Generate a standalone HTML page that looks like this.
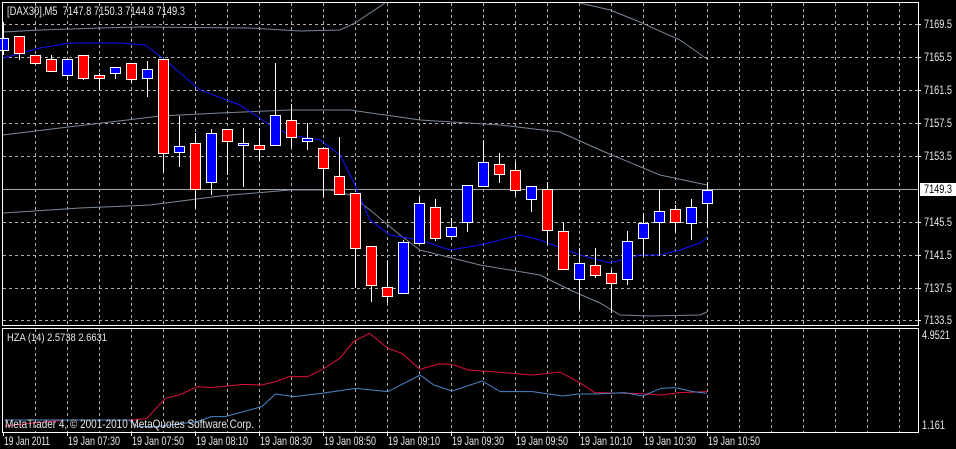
<!DOCTYPE html>
<html><head><meta charset="utf-8"><style>
html,body{margin:0;padding:0;background:#000;width:956px;height:449px;overflow:hidden}
svg{display:block}
text{font-family:"Liberation Sans",sans-serif;font-size:12px;fill:#e8e8e8}
</style></head><body>
<svg width="956" height="449" viewBox="0 0 956 449" xmlns="http://www.w3.org/2000/svg">
<rect width="956" height="449" fill="#000"/>
<g stroke="#b0b0b0" stroke-width="1" stroke-dasharray="3,3" shape-rendering="crispEdges">
<path d="M3 24.5H918M3 57.5H918M3 90.5H918M3 123.5H918M3 156.5H918M3 222.5H918M3 255.5H918M3 288.5H918M3 320.5H918"/>
<path d="M35.5 3V325M67.5 3V325M99.5 3V325M131.5 3V325M163.5 3V325M195.5 3V325M227.5 3V325M259.5 3V325M291.5 3V325M323.5 3V325M355.5 3V325M387.5 3V325M419.5 3V325M451.5 3V325M483.5 3V325M515.5 3V325M547.5 3V325M579.5 3V325M611.5 3V325M643.5 3V325M675.5 3V325M707.5 3V325M739.5 3V325M771.5 3V325M803.5 3V325M835.5 3V325M867.5 3V325M899.5 3V325"/>
<path d="M35.5 329V432M67.5 329V432M99.5 329V432M131.5 329V432M163.5 329V432M195.5 329V432M227.5 329V432M259.5 329V432M291.5 329V432M323.5 329V432M355.5 329V432M387.5 329V432M419.5 329V432M451.5 329V432M483.5 329V432M515.5 329V432M547.5 329V432M579.5 329V432M611.5 329V432M643.5 329V432M675.5 329V432M707.5 329V432M739.5 329V432M771.5 329V432M803.5 329V432M835.5 329V432M867.5 329V432M899.5 329V432"/>
</g>
<path d="M3 189.5H918" stroke="#a8a8a8" stroke-width="1" shape-rendering="crispEdges"/>
<g fill="none" stroke="#7a8898" stroke-width="1">
<polyline points="3,32 40,30 100,28 140,27 250,28 300,31 340,30 355,23 385,3"/>
<polyline points="580,3 610,10 635,20 680,40 707,59"/>
<polyline points="3,135 60,128 160,116 220,113 290,110 350,110 420,120 500,125 560,132 600,150 660,175 707,185"/>
<polyline points="3,213 80,208 150,205 220,196 290,190 330,190 350,195 370,210 400,235 420,250 480,265 540,275 570,290 600,303 620,315 650,316 700,315 707,312"/>
</g>
<polyline fill="none" stroke="#1010ff" stroke-width="1" points="3,58 40,48 70,43 120,43 145,45 165,60 200,90 240,105 270,125 290,135 320,140 340,155 355,185 370,220 390,235 420,240 450,250 480,245 520,235 540,240 580,255 610,263 640,255 660,255 680,250 700,243 707,237"/>
<g stroke="#fff" stroke-width="1">
<path d="M3.5 22V55M19.5 36V60M35.5 55V63M51.5 55V71M67.5 59V80M83.5 55V80M99.5 73V90M115.5 67V79M131.5 63V82M147.5 61V97M163.5 59V172M179.5 116V167M195.5 133V208M211.5 129V195M227.5 129V175M243.5 128V187M259.5 128V161M275.5 63V145M291.5 104V147M307.5 123V150M323.5 147V197M339.5 137V194M355.5 193V288M371.5 246V302M387.5 260V303M403.5 240V293M419.5 197V244M435.5 199V241M451.5 218V238M467.5 185V232M483.5 140V186M499.5 153V183M515.5 162V195M531.5 186V212M547.5 182V245M563.5 223V269M579.5 248V310M595.5 248V278M611.5 270V313M627.5 231V285M643.5 213V256M659.5 190V256M675.5 205V232M691.5 199V240M707.5 182V228"/>
</g>
<g stroke="#fff" stroke-width="1">
<rect x="-1.5" y="38.5" width="10" height="12" fill="#0000ff"/>
<rect x="14.5" y="36.5" width="10" height="17" fill="#ff0000"/>
<rect x="30.5" y="55.5" width="10" height="8" fill="#ff0000"/>
<rect x="46.5" y="59.5" width="10" height="12" fill="#ff0000"/>
<rect x="62.5" y="59.5" width="10" height="16" fill="#0000ff"/>
<rect x="78.5" y="55.5" width="10" height="23" fill="#ff0000"/>
<rect x="94.5" y="75.5" width="10" height="3" fill="#ff0000"/>
<rect x="110.5" y="67.5" width="10" height="6" fill="#0000ff"/>
<rect x="126.5" y="63.5" width="10" height="16" fill="#ff0000"/>
<rect x="142.5" y="69.5" width="10" height="9" fill="#0000ff"/>
<rect x="158.5" y="59.5" width="10" height="94" fill="#ff0000"/>
<rect x="174.5" y="146.5" width="10" height="6" fill="#0000ff"/>
<rect x="190.5" y="143.5" width="10" height="46" fill="#ff0000"/>
<rect x="206.5" y="133.5" width="10" height="49" fill="#0000ff"/>
<rect x="222.5" y="129.5" width="10" height="12" fill="#ff0000"/>
<rect x="238.5" y="143.5" width="10" height="2" fill="#0000ff"/>
<rect x="254.5" y="145.5" width="10" height="4" fill="#ff0000"/>
<rect x="270.5" y="115.5" width="10" height="30" fill="#0000ff"/>
<rect x="286.5" y="120.5" width="10" height="17" fill="#ff0000"/>
<rect x="302.5" y="138.5" width="10" height="3" fill="#0000ff"/>
<rect x="318.5" y="148.5" width="10" height="20" fill="#ff0000"/>
<rect x="334.5" y="176.5" width="10" height="18" fill="#ff0000"/>
<rect x="350.5" y="193.5" width="10" height="55" fill="#ff0000"/>
<rect x="366.5" y="246.5" width="10" height="39" fill="#ff0000"/>
<rect x="382.5" y="287.5" width="10" height="9" fill="#ff0000"/>
<rect x="398.5" y="242.5" width="10" height="51" fill="#0000ff"/>
<rect x="414.5" y="203.5" width="10" height="40" fill="#0000ff"/>
<rect x="430.5" y="207.5" width="10" height="31" fill="#ff0000"/>
<rect x="446.5" y="227.5" width="10" height="9" fill="#0000ff"/>
<rect x="462.5" y="185.5" width="10" height="37" fill="#0000ff"/>
<rect x="478.5" y="162.5" width="10" height="24" fill="#0000ff"/>
<rect x="494.5" y="164.5" width="10" height="10" fill="#ff0000"/>
<rect x="510.5" y="170.5" width="10" height="20" fill="#ff0000"/>
<rect x="526.5" y="186.5" width="10" height="13" fill="#0000ff"/>
<rect x="542.5" y="189.5" width="10" height="41" fill="#ff0000"/>
<rect x="558.5" y="231.5" width="10" height="38" fill="#ff0000"/>
<rect x="574.5" y="263.5" width="10" height="16" fill="#0000ff"/>
<rect x="590.5" y="265.5" width="10" height="10" fill="#ff0000"/>
<rect x="606.5" y="273.5" width="10" height="10" fill="#ff0000"/>
<rect x="622.5" y="241.5" width="10" height="38" fill="#0000ff"/>
<rect x="638.5" y="223.5" width="10" height="15" fill="#0000ff"/>
<rect x="654.5" y="211.5" width="10" height="11" fill="#0000ff"/>
<rect x="670.5" y="209.5" width="10" height="13" fill="#ff0000"/>
<rect x="686.5" y="207.5" width="10" height="16" fill="#0000ff"/>
<rect x="702.5" y="190.5" width="10" height="13" fill="#0000ff"/>
</g>
<g transform="translate(0,320) scale(0.4591,0.3333)" fill="none" stroke-width="1">
<polyline vector-effect="non-scaling-stroke" stroke="#e0103a" points="10,318 140,300 290,300 320,295 360,235 390,225 430,200 460,203 530,193 570,195 600,185 630,170 670,170 700,150 740,115 770,65 805,40 845,85 875,100 915,148 955,132 985,133 1020,150 1090,157 1130,162 1160,165 1220,156 1265,190 1295,218 1380,220 1440,225 1480,218 1540,215"/>
<polyline vector-effect="non-scaling-stroke" stroke="#4a86c8" points="10,300 280,300 300,320 340,320 430,305 460,290 490,290 570,260 600,222 640,230 700,220 775,205 810,210 845,215 915,165 945,195 985,213 1050,183 1090,215 1160,215 1225,228 1260,222 1300,222 1360,218 1400,228 1440,205 1470,203 1510,215 1540,220"/>
</g>
<g fill="none" stroke="#fff" stroke-width="1" shape-rendering="crispEdges">
<rect x="2.5" y="2.5" width="916" height="323"/>
<rect x="2.5" y="328.5" width="916" height="104"/>
<path d="M918 24.5h3M918 57.5h3M918 90.5h3M918 123.5h3M918 156.5h3M918 222.5h3M918 255.5h3M918 288.5h3M918 320.5h3"/>
<path d="M3.5 432v4M67.5 432v4M131.5 432v4M195.5 432v4M259.5 432v4M323.5 432v4M387.5 432v4M451.5 432v4M515.5 432v4M579.5 432v4M643.5 432v4M707.5 432v4"/>
</g>
<text x="7" y="15" xml:space="preserve" textLength="178" lengthAdjust="spacingAndGlyphs">[DAX30],M5  7147.8 7150.3 7144.8 7149.3</text>
<text x="7" y="341" style="font-size:11px" textLength="100" lengthAdjust="spacingAndGlyphs">HZA (14) 2.5738 2.6631</text>
<text x="5" y="428" textLength="249" lengthAdjust="spacingAndGlyphs">MetaTrader 4, © 2001-2010 MetaQuotes Software Corp.</text>
<g style="font-size:11.5px">
<text x="924" y="28" textLength="28" lengthAdjust="spacingAndGlyphs">7169.5</text>
<text x="924" y="61" textLength="28" lengthAdjust="spacingAndGlyphs">7165.5</text>
<text x="924" y="94" textLength="28" lengthAdjust="spacingAndGlyphs">7161.5</text>
<text x="924" y="127" textLength="28" lengthAdjust="spacingAndGlyphs">7157.5</text>
<text x="924" y="160" textLength="28" lengthAdjust="spacingAndGlyphs">7153.5</text>
<text x="924" y="226" textLength="28" lengthAdjust="spacingAndGlyphs">7145.5</text>
<text x="924" y="259" textLength="28" lengthAdjust="spacingAndGlyphs">7141.5</text>
<text x="924" y="292" textLength="28" lengthAdjust="spacingAndGlyphs">7137.5</text>
<text x="924" y="324" textLength="28" lengthAdjust="spacingAndGlyphs">7133.5</text>
<text x="922" y="339" textLength="28" lengthAdjust="spacingAndGlyphs">4.9521</text>
<text x="922" y="429" textLength="23" lengthAdjust="spacingAndGlyphs">1.161</text>
</g>
<rect x="920" y="183" width="36" height="13" fill="#fff"/>
<text x="924" y="193" style="font-size:11.5px;fill:#000" textLength="28" lengthAdjust="spacingAndGlyphs">7149.3</text>
<g style="font-size:11.5px">
<text x="4" y="445" textLength="46" lengthAdjust="spacingAndGlyphs">19 Jan 2011</text>
<text x="68" y="445" textLength="52" lengthAdjust="spacingAndGlyphs">19 Jan 07:30</text>
<text x="132" y="445" textLength="52" lengthAdjust="spacingAndGlyphs">19 Jan 07:50</text>
<text x="196" y="445" textLength="52" lengthAdjust="spacingAndGlyphs">19 Jan 08:10</text>
<text x="260" y="445" textLength="52" lengthAdjust="spacingAndGlyphs">19 Jan 08:30</text>
<text x="324" y="445" textLength="52" lengthAdjust="spacingAndGlyphs">19 Jan 08:50</text>
<text x="388" y="445" textLength="52" lengthAdjust="spacingAndGlyphs">19 Jan 09:10</text>
<text x="452" y="445" textLength="52" lengthAdjust="spacingAndGlyphs">19 Jan 09:30</text>
<text x="516" y="445" textLength="52" lengthAdjust="spacingAndGlyphs">19 Jan 09:50</text>
<text x="580" y="445" textLength="52" lengthAdjust="spacingAndGlyphs">19 Jan 10:10</text>
<text x="644" y="445" textLength="52" lengthAdjust="spacingAndGlyphs">19 Jan 10:30</text>
<text x="708" y="445" textLength="52" lengthAdjust="spacingAndGlyphs">19 Jan 10:50</text>
</g>
</svg>
</body></html>
